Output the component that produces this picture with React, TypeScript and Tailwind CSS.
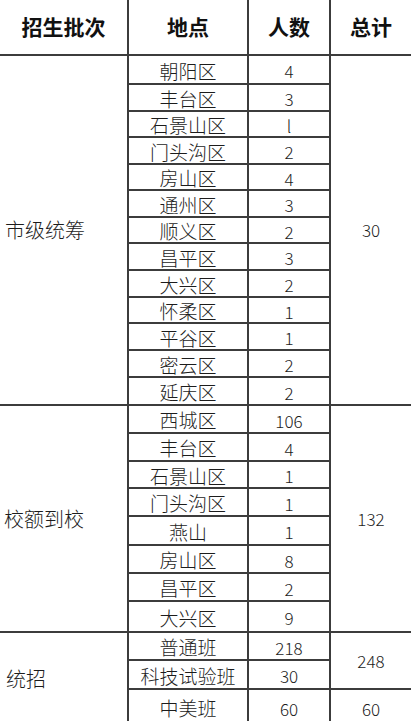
import React from "react";

const font = { fontFamily: '"Noto Sans CJK SC", "Noto Sans", sans-serif' };

function H({ children, last }: { children: React.ReactNode; last?: boolean }) {
  return (
    <div
      className={`flex items-center justify-center border-b-2 border-[#3c3c3c] text-[21px] font-bold text-[#111] ${last ? "" : "border-r-2"}`}
    >
      {children}
    </div>
  );
}

function C({ children, num }: { children: React.ReactNode; num?: boolean }) {
  return (
    <div
      className={`flex items-center justify-center border-b-2 border-r-2 border-[#3c3c3c] pt-[3px] font-light text-[#1c1c1c] ${num ? "text-[17px]" : "text-[19px]"}`}
    >
      {children}
    </div>
  );
}

const sec1: [string, string][] = [
  ["朝阳区", "4"],
  ["丰台区", "3"],
  ["石景山区", "l"],
  ["门头沟区", "2"],
  ["房山区", "4"],
  ["通州区", "3"],
  ["顺义区", "2"],
  ["昌平区", "3"],
  ["大兴区", "2"],
  ["怀柔区", "1"],
  ["平谷区", "1"],
  ["密云区", "2"],
  ["延庆区", "2"],
];

const sec2: [string, string][] = [
  ["西城区", "106"],
  ["丰台区", "4"],
  ["石景山区", "1"],
  ["门头沟区", "1"],
  ["燕山", "1"],
  ["房山区", "8"],
  ["昌平区", "2"],
  ["大兴区", "9"],
];

export default function App() {
  return (
    <div className="h-[721px] w-[411px] overflow-hidden bg-white" style={font}>
      <div className="grid grid-cols-[129px_120px_82px_80px] grid-rows-[56px_29px_27px_26px_27px_26px_27px_26px_27px_27px_26px_27px_27px_28px_28px_28px_27px_28px_29px_28px_28px_31px_28px_29px_34px]">
        <H>招生批次</H>
        <H>地点</H>
        <H>人数</H>
        <H last>总计</H>

        {sec1.map(([a, b], i) => (
          <React.Fragment key={"s1" + i}>
            {i === 0 && (
              <div className="row-span-13 flex items-center border-b-2 border-r-2 border-[#3c3c3c] pl-[5px] text-[20px] font-light text-[#1c1c1c]">
                市级统筹
              </div>
            )}
            <C>{a}</C>
            <C num>{b}</C>
            {i === 0 && (
              <div className="row-span-13 flex items-center justify-center border-b-2 border-[#3c3c3c] text-[17px] font-light text-[#1c1c1c]">
                30
              </div>
            )}
          </React.Fragment>
        ))}

        {sec2.map(([a, b], i) => (
          <React.Fragment key={"s2" + i}>
            {i === 0 && (
              <div className="row-span-8 flex items-center border-b-2 border-r-2 border-[#3c3c3c] pl-[4px] text-[20px] font-light text-[#1c1c1c]">
                校额到校
              </div>
            )}
            <C>{a}</C>
            <C num>{b}</C>
            {i === 0 && (
              <div className="row-span-8 flex items-center justify-center border-b-2 border-[#3c3c3c] text-[17px] font-light text-[#1c1c1c]">
                132
              </div>
            )}
          </React.Fragment>
        ))}

        <div className="row-span-3 flex items-center border-r-2 border-[#3c3c3c] pl-[6px] text-[20px] font-light text-[#1c1c1c]">
          统招
        </div>
        <C>普通班</C>
        <C num>218</C>
        <div className="row-span-2 flex items-center justify-center border-b-2 border-[#3c3c3c] text-[17px] font-light text-[#1c1c1c]">
          248
        </div>
        <C>科技试验班</C>
        <C num>30</C>
        <div className="flex items-center justify-center border-r-2 border-[#3c3c3c] pt-[3px] text-[19px] font-light text-[#1c1c1c]">
          中美班
        </div>
        <div className="flex items-center justify-center border-r-2 border-[#3c3c3c] pt-[3px] text-[17px] font-light text-[#1c1c1c]">
          60
        </div>
        <div className="flex items-center justify-center pt-[3px] text-[17px] font-light text-[#1c1c1c]">
          60
        </div>
      </div>
    </div>
  );
}
